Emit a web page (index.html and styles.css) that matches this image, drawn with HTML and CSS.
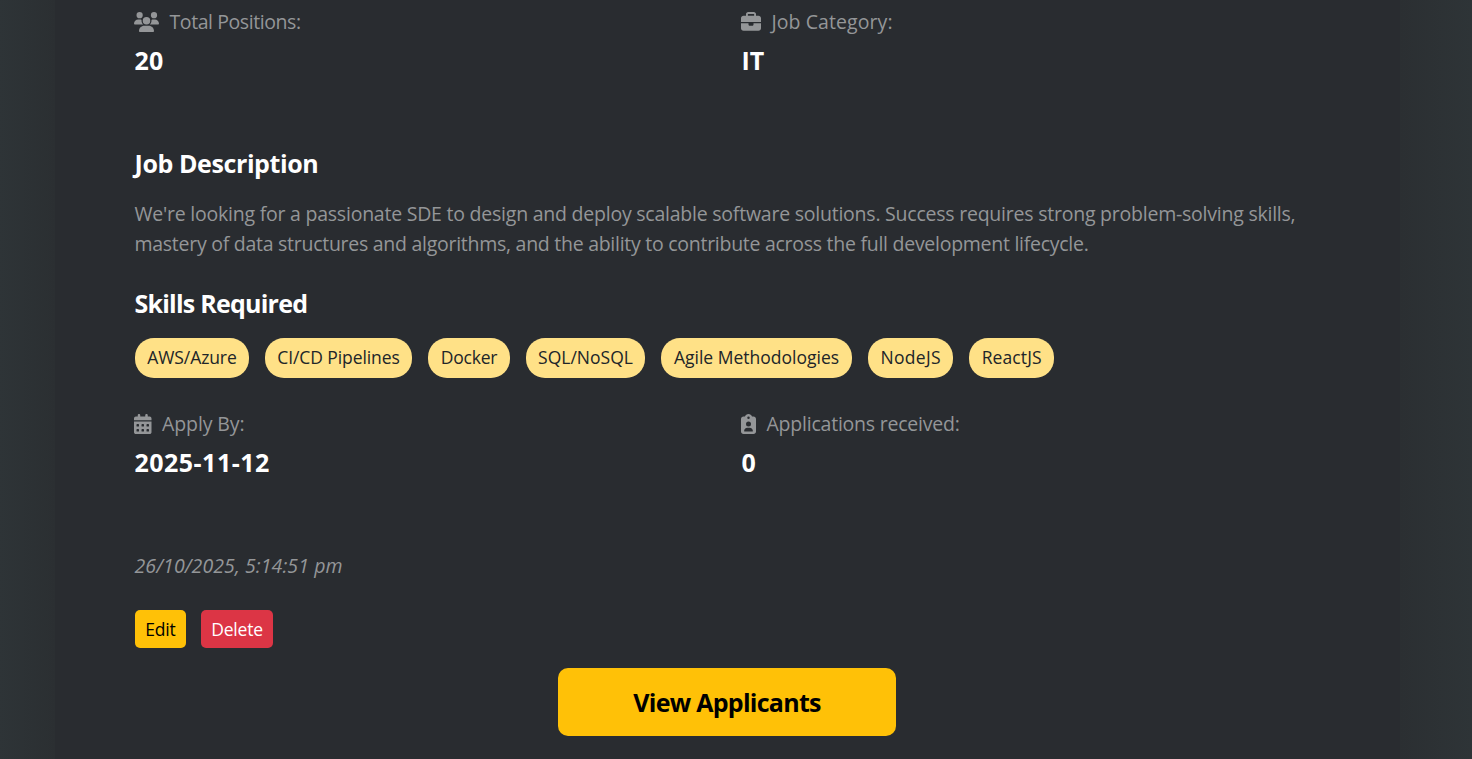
FILE: index.html
```html
<!DOCTYPE html>
<html lang="en">
<head>
<meta charset="utf-8">
<title>Job Details</title>
<link rel="stylesheet" href="styles.css">
</head>
<body>
<main class="card">
  <section class="row row-top">
    <div class="field">
      <p class="label"><svg class="icon icon-users" viewBox="0 0 640 512"><path d="M144 0a80 80 0 1 1 0 160A80 80 0 1 1 144 0zM512 0a80 80 0 1 1 0 160A80 80 0 1 1 512 0zM0 298.7C0 239.8 47.8 192 106.7 192h42.7c15.9 0 31 3.5 44.6 9.7c-1.3 7.2-1.9 14.7-1.9 22.3c0 38.2 16.8 72.5 43.3 96c-.2 0-.4 0-.7 0H21.3C9.6 320 0 310.4 0 298.7zM405.3 320c-.2 0-.4 0-.7 0c26.6-23.5 43.3-57.8 43.3-96c0-7.6-.7-15-1.9-22.3c13.6-6.3 28.7-9.7 44.6-9.7h42.7C592.2 192 640 239.8 640 298.7c0 11.8-9.6 21.3-21.3 21.3H405.3zM224 224a96 96 0 1 1 192 0 96 96 0 1 1 -192 0zM128 485.3C128 411.7 187.7 352 261.3 352H378.7C452.3 352 512 411.7 512 485.3c0 14.7-11.9 26.7-26.7 26.7H154.7c-14.7 0-26.7-11.9-26.7-26.7z"/></svg><span class="t-positions">Total Positions:</span></p>
      <p class="value v-count">20</p>
    </div>
    <div class="field">
      <p class="label"><svg class="icon icon-briefcase" viewBox="0 0 512 512"><path d="M184 48H328c4.4 0 8 3.6 8 8V96H176V56c0-4.4 3.6-8 8-8zm-56 8V96H64C28.7 96 0 124.7 0 160v96H192 320 512V160c0-35.3-28.7-64-64-64H384V56c0-30.9-25.1-56-56-56H184c-30.9 0-56 25.1-56 56zM512 288H320v32c0 17.7-14.3 32-32 32H224c-17.7 0-32-14.3-32-32V288H0V416c0 35.3 28.7 64 64 64H448c35.3 0 64-28.7 64-64V288z"/></svg><span class="t-category">Job Category:</span></p>
      <p class="value v-category">IT</p>
    </div>
  </section>

  <h2 class="heading h-description">Job Description</h2>
  <p class="description"><span class="line-a">We're looking for a passionate SDE to design and deploy scalable software solutions. Success requires strong problem-solving skills,</span><br><span class="line-b">mastery of data structures and algorithms, and the ability to contribute across the full development lifecycle.</span></p>

  <h2 class="heading h-skills">Skills Required</h2>
  <ul class="skills">
    <li class="chip chip-aws">AWS/Azure</li>
    <li class="chip chip-cicd">CI/CD Pipelines</li>
    <li class="chip chip-docker">Docker</li>
    <li class="chip chip-sql">SQL/NoSQL</li>
    <li class="chip chip-agile">Agile Methodologies</li>
    <li class="chip chip-node">NodeJS</li>
    <li class="chip chip-react">ReactJS</li>
  </ul>

  <section class="row row-bottom">
    <div class="field">
      <p class="label"><svg class="icon icon-calendar" viewBox="0 0 448 512"><path d="M128 0c17.7 0 32 14.3 32 32V64H288V32c0-17.7 14.3-32 32-32s32 14.3 32 32V64h48c26.5 0 48 21.5 48 48v48H0V112C0 85.5 21.5 64 48 64H96V32c0-17.7 14.3-32 32-32zM0 192H448V464c0 26.5-21.5 48-48 48H48c-26.5 0-48-21.5-48-48V192zm64 80v32c0 8.8 7.2 16 16 16h32c8.8 0 16-7.2 16-16V272c0-8.8-7.2-16-16-16H80c-8.8 0-16 7.2-16 16zm128 0v32c0 8.8 7.2 16 16 16h32c8.8 0 16-7.2 16-16V272c0-8.8-7.2-16-16-16H208c-8.8 0-16 7.2-16 16zm144-16c-8.8 0-16 7.2-16 16v32c0 8.8 7.2 16 16 16h32c8.8 0 16-7.2 16-16V272c0-8.8-7.2-16-16-16H336zM64 400v32c0 8.8 7.2 16 16 16h32c8.8 0 16-7.2 16-16V400c0-8.8-7.2-16-16-16H80c-8.8 0-16 7.2-16 16zm144-16c-8.8 0-16 7.2-16 16v32c0 8.8 7.2 16 16 16h32c8.8 0 16-7.2 16-16V400c0-8.8-7.2-16-16-16H208zm112 16v32c0 8.8 7.2 16 16 16h32c8.8 0 16-7.2 16-16V400c0-8.8-7.2-16-16-16H336c-8.8 0-16 7.2-16 16z"/></svg><span class="t-apply">Apply By:</span></p>
      <p class="value v-date">2025-11-12</p>
    </div>
    <div class="field">
      <p class="label"><svg class="icon icon-clipboard" viewBox="0 0 384 512"><path d="M192 0c-41.8 0-77.4 26.7-90.5 64H64C28.7 64 0 92.7 0 128V448c0 35.3 28.7 64 64 64H320c35.3 0 64-28.7 64-64V128c0-35.3-28.7-64-64-64H282.5C269.4 26.7 233.8 0 192 0zm0 64a32 32 0 1 1 0 64 32 32 0 1 1 0-64zM128 256a64 64 0 1 1 128 0 64 64 0 1 1 -128 0zM80 432c0-44.2 35.8-80 80-80h64c44.2 0 80 35.8 80 80c0 8.8-7.2 16-16 16H96c-8.8 0-16-7.2-16-16z" fill-rule="evenodd"/></svg><span class="t-received">Applications received:</span></p>
      <p class="value v-zero">0</p>
    </div>
  </section>

  <p class="timestamp">26/10/2025, 5:14:51 pm</p>
  <div class="actions">
    <button class="btn btn-edit">Edit</button>
    <button class="btn btn-delete">Delete</button>
  </div>
  <button class="btn-view">View Applicants</button>
</main>
</body>
</html>
```
FILE: styles.css
```css
* { box-sizing: border-box; margin: 0; padding: 0; }
html {
  height: 100%;
  overflow: hidden;
  background: linear-gradient(90deg, #2e3437 0, #2b2f32 55px, #2b2f32 1400px, #2e3437 1472px);
}
body {
  height: 759px;
  overflow: hidden;
  padding-left: 55px;
  font-family: "Open Sans", "Noto Sans", sans-serif;
  font-size: 19.5px;
  line-height: 30px;
  color: #949698;
}
.card {
  width: 1345px;
  height: 759px;
  padding: 7px 81px 0 79.5px;
  background: #292c30;
}
.row { display: grid; grid-template-columns: 577px 577px; column-gap: 30px; }
.field { height: 74px; }
.label { display: flex; align-items: center; height: 30px; white-space: nowrap; }
.icon { height: 20px; fill: #949698; margin: -1px 10.5px 0 -0.5px; flex: none; }
.icon-users { width: 25px; }
.icon-briefcase { width: 20px; }
.icon-calendar { width: 17.5px; }
.icon-clipboard { width: 15px; }
.t-positions { letter-spacing: -0.42px; }
.t-category { letter-spacing: 0.07px; }
.t-apply { letter-spacing: -0.1px; }
.t-received { letter-spacing: -0.22px; }
.value { margin-top: 9px; padding-bottom: 2px; font-size: 25px; line-height: 28px; font-weight: 700; color: #fff; }
.v-count { letter-spacing: 0.3px; }
.v-date { letter-spacing: 0.48px; }
.heading { padding-bottom: 2px; font-size: 25px; line-height: 28px; font-weight: 700; color: #fff; white-space: nowrap; }
.h-description { margin-top: 68px; letter-spacing: -0.4px; }
.description { margin-top: 20px; white-space: nowrap; }
.line-a { letter-spacing: -0.23px; }
.line-b { letter-spacing: -0.27px; }
.h-skills { margin-top: 30px; letter-spacing: -0.76px; }
.skills { display: flex; gap: 16px; margin: 19px 0 0 0.5px; list-style: none; }
.chip {
  height: 40px;
  border-radius: 19px;
  background: #ffe187;
  color: #212529;
  font-size: 17.5px;
  line-height: 39px;
  text-align: center;
  white-space: nowrap;
}
.chip-aws { width: 114px; letter-spacing: -0.1px; }
.chip-cicd { width: 147px; letter-spacing: -0.1px; }
.chip-docker { width: 82px; letter-spacing: -0.2px; }
.chip-sql { width: 119px; }
.chip-agile { width: 191px; }
.chip-node { width: 85.4px; letter-spacing: 0.3px; }
.chip-react { width: 84.6px; letter-spacing: 0.1px; }
.row-bottom { margin-top: 31px; }
.timestamp { margin-top: 68px; font-style: italic; letter-spacing: 0.08px; white-space: nowrap; }
.actions { display: flex; gap: 15px; margin: 29px 0 0 0.5px; }
.btn { height: 38px; border: 0; border-radius: 5px; font: 17.5px/39px "Open Sans", sans-serif; letter-spacing: -0.2px; }
.btn-edit { width: 51px; background: #ffc107; color: #000; }
.btn-delete { width: 72px; background: #dc3545; color: #fff; }
.btn-view {
  display: block;
  width: 338px;
  height: 68px;
  margin: 20px 0 0 423.5px;
  border: 0;
  border-radius: 10px;
  background: #ffc107;
  color: #000;
  font: 700 25px/69px "Open Sans", sans-serif;
  letter-spacing: -0.73px;
}
```
